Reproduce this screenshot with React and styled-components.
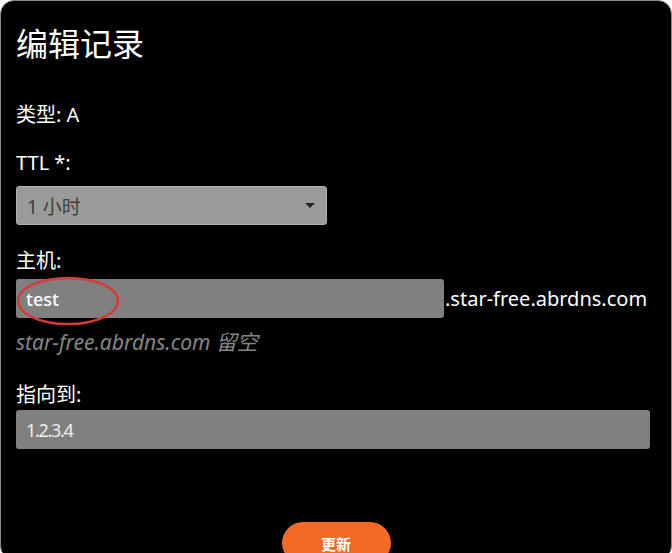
import React from 'react';
import styled, { createGlobalStyle } from 'styled-components';

const GlobalStyle = createGlobalStyle`
  html, body {
    margin: 0;
    background: #fff;
    overflow: hidden;
    font-family: "Noto Sans", "Noto Sans CJK SC", sans-serif;
  }
`;

const Card = styled.div`
  box-sizing: border-box;
  height: 560px;
  background: #000;
  border: 1px solid #8a8a8a;
  border-radius: 14px;
  padding: 20px 21px 0 15px;
  color: #fff;
`;

const Title = styled.h2`
  margin: 0;
  font-size: 32px;
  line-height: 46px;
  font-weight: 400;
`;

const Label = styled.div`
  margin-top: ${(p) => p.$top}px;
  margin-bottom: ${(p) => p.$bottom || 0}px;
  font-size: 20px;
  line-height: 26px;
`;

const SelectBox = styled.div`
  box-sizing: border-box;
  width: 311px;
  height: 39px;
  display: flex;
  align-items: center;
  justify-content: space-between;
  padding: 0 11px 0 10px;
  background: #9b9b9b;
  border: 1px solid #b0b0b0;
  border-radius: 3px;
  color: #3e3e3e;
  font-size: 19px;
`;

const Caret = styled.span`
  width: 0;
  height: 0;
  border-left: 5px solid transparent;
  border-right: 5px solid transparent;
  border-top: 5px solid #222;
`;

const HostRow = styled.div`
  display: flex;
  align-items: center;
  position: relative;
`;

const TextInput = styled.div`
  box-sizing: border-box;
  width: ${(p) => p.$width};
  height: 39px;
  display: flex;
  align-items: center;
  padding: 0 10px;
  background: #808080;
  border-radius: 3px;
  color: ${(p) => p.$color || '#fff'};
  font-size: 18px;
  font-weight: ${(p) => p.$weight || 400};
  letter-spacing: ${(p) => p.$spacing || 'normal'};
`;

const Suffix = styled.span`
  margin-left: 1px;
  font-size: 20px;
  white-space: nowrap;
`;

const Mark = styled.svg`
  position: absolute;
  left: 0;
  top: -4px;
  pointer-events: none;
`;

const Hint = styled.div`
  margin-top: 12px;
  font-size: 21px;
  line-height: 24px;
  font-style: italic;
  color: #858585;
`;

const Footer = styled.div`
  display: flex;
  justify-content: center;
  margin-top: 73px;
  padding-left: 6px;
`;

const Button = styled.button`
  width: 109px;
  height: 42px;
  border: none;
  border-radius: 21px;
  background: #f26a25;
  color: #fff;
  font-size: 15px;
  font-weight: 700;
  font-family: inherit;
`;

export default function App() {
  return (
    <>
      <GlobalStyle />
      <Card>
        <Title>编辑记录</Title>
        <Label $top={35}>类型: A</Label>
        <Label $top={22} $bottom={10}>TTL *:</Label>
        <SelectBox>
          <span>1 小时</span>
          <Caret />
        </SelectBox>
        <Label $top={23} $bottom={5}>主机:</Label>
        <HostRow>
          <TextInput $width="428px" $weight={500}>test</TextInput>
          <Suffix>.star-free.abrdns.com</Suffix>
          <Mark width="106" height="54" viewBox="0 0 106 54">
            <ellipse cx="52" cy="26" rx="50" ry="23" fill="none" stroke="#d63a3a" strokeWidth="2.5" />
          </Mark>
        </HostRow>
        <Hint>star-free.abrdns.com 留空</Hint>
        <Label $top={28} $bottom={2}>指向到:</Label>
        <TextInput $width="634px" $color="#eee" $spacing="-1.3px">1.2.3.4</TextInput>
        <Footer>
          <Button>更新</Button>
        </Footer>
      </Card>
    </>
  );
}
